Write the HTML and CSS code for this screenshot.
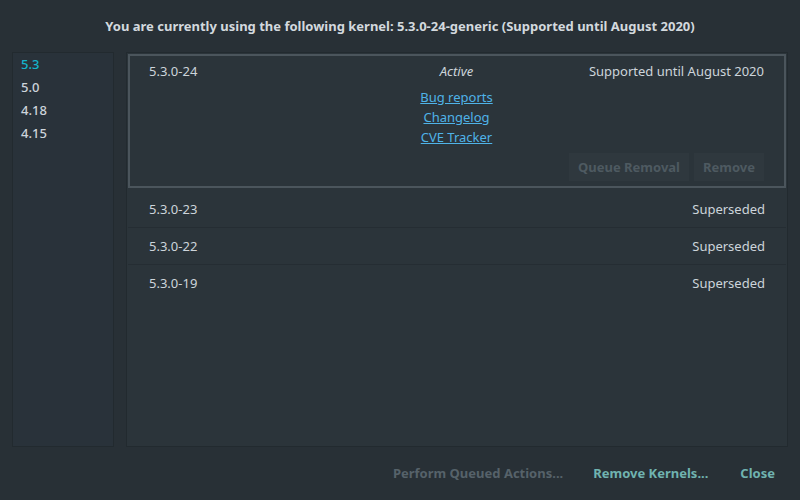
FILE: index.html
```html
<!DOCTYPE html>
<html>
<head>
<meta charset="utf-8">
<link rel="stylesheet" href="styles.css">
</head>
<body>
<div class="window">
  <header class="title">You are currently using the following kernel: 5.3.0-24-generic (Supported until August 2020)</header>
  <div class="content">
    <nav class="sidebar">
      <div class="side-item selected">5.3</div>
      <div class="side-item">5.0</div>
      <div class="side-item">4.18</div>
      <div class="side-item">4.15</div>
    </nav>
    <main class="panel">
      <section class="active-row">
        <div class="row-top">
          <span class="name">5.3.0-24</span>
          <span class="status">Active</span>
          <span class="support">Supported until August 2020</span>
        </div>
        <div class="links">
          <a class="link" href="#">Bug reports</a>
          <a class="link" href="#">Changelog</a>
          <a class="link" href="#">CVE Tracker</a>
        </div>
        <div class="actions">
          <button class="btn">Queue Removal</button>
          <button class="btn">Remove</button>
        </div>
      </section>
      <div class="row first"><span class="name">5.3.0-23</span><span class="support">Superseded</span></div>
      <div class="row"><span class="name">5.3.0-22</span><span class="support">Superseded</span></div>
      <div class="row"><span class="name">5.3.0-19</span><span class="support">Superseded</span></div>
    </main>
  </div>
  <footer class="footer">
    <button class="fbtn disabled">Perform Queued Actions...</button>
    <button class="fbtn">Remove Kernels...</button>
    <button class="fbtn">Close</button>
  </footer>
</div>
</body>
</html>
```
FILE: styles.css
```css
html, body {
  margin: 0;
  padding: 0;
  background: #283036;
}
body {
  font-family: "Noto Sans", "Open Sans", sans-serif;
  font-size: 13px;
  color: #cdd4da;
}
.window {
  width: 800px;
  height: 500px;
  display: flex;
  flex-direction: column;
}
.title {
  height: 52px;
  display: flex;
  align-items: center;
  justify-content: center;
  font-weight: bold;
  color: #d3d9de;
}
.content {
  display: flex;
  gap: 12px;
  padding: 0 12px;
  height: 395px;
}
.sidebar {
  width: 100px;
  border: 1px solid #222a2f;
  background: #29323a;
}
.side-item {
  height: 23px;
  line-height: 23px;
  padding-left: 8px;
  font-weight: 500;
}
.side-item.selected {
  color: #14b4cc;
}
.panel {
  flex: 1;
  border: 1px solid #222a2f;
  background: #2b343a;
  padding: 1px;
}
.active-row {
  border: 2px solid #4b555c;
  padding: 5px 20px 5px 19px;
  height: 120px;
  display: flex;
  flex-direction: column;
}
.row-top {
  display: grid;
  grid-template-columns: 1fr auto 1fr;
  line-height: 20px;
}
.status {
  font-style: italic;
}
.support {
  text-align: right;
}
.links {
  display: flex;
  flex-direction: column;
  align-items: center;
  line-height: 20px;
  margin-top: 6px;
}
.link {
  color: #4fb3e8;
  text-decoration: underline;
}
.actions {
  margin-top: auto;
  display: flex;
  justify-content: flex-end;
  gap: 5px;
}
.btn {
  font-family: inherit;
  font-size: 13px;
  font-weight: bold;
  color: #4e5a61;
  background: #2f383e;
  border: none;
  height: 28px;
  padding: 0 9px;
}
.row {
  height: 36px;
  display: flex;
  align-items: center;
  justify-content: space-between;
  padding: 0 21px 0 21px;
  border-top: 1px solid #252d33;
}
.row.first {
  border-top: none;
  height: 37px;
  margin-top: 2px;
}
.footer {
  flex: 1;
  display: flex;
  justify-content: flex-end;
  align-items: center;
  padding-right: 9px;
  padding-bottom: 2px;
}
.fbtn {
  font-family: inherit;
  font-size: 13px;
  font-weight: bold;
  color: #70b3b0;
  background: transparent;
  border: none;
  padding: 0 16px;
  height: 30px;
}
.fbtn.disabled {
  color: #56626a;
  margin-right: -2px;
}
```
